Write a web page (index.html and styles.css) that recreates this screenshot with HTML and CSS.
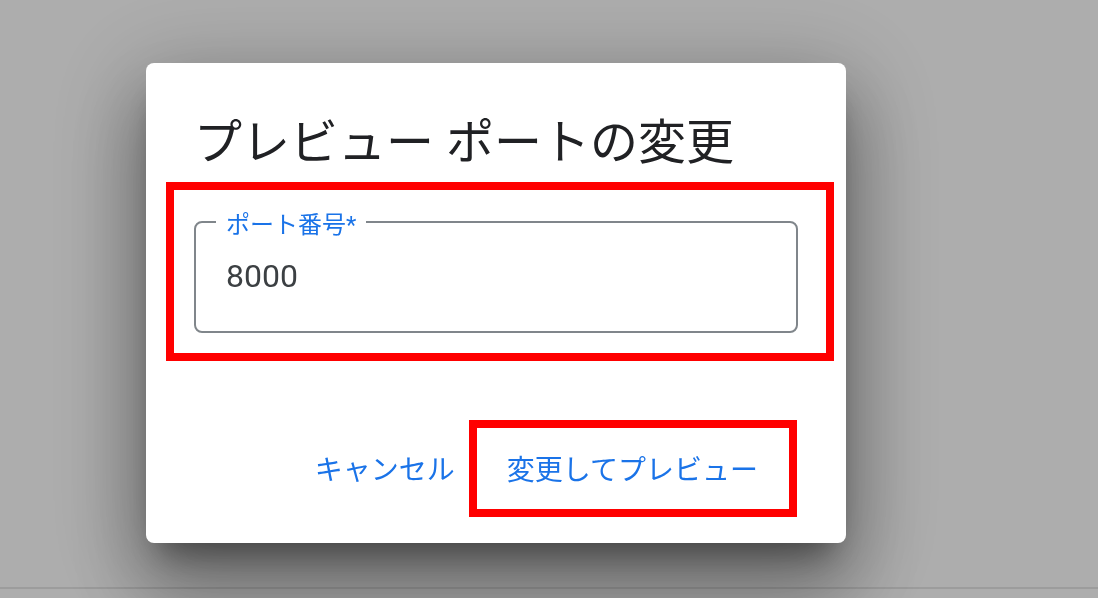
FILE: index.html
```html
<!DOCTYPE html>
<html lang="ja">
<head>
<meta charset="utf-8">
<title>プレビュー ポートの変更</title>
<link rel="stylesheet" href="styles.css">
</head>
<body>
<div class="page">
  <main class="main"></main>
  <footer class="footer"></footer>
</div>
<div class="backdrop"></div>
<div class="overlay">
  <div class="dialog" role="dialog" aria-labelledby="dlg-title">
    <h1 class="dialog-title" id="dlg-title">プレビュー ポートの変更</h1>
    <div class="dialog-content">
      <fieldset class="field">
        <legend class="field-label">ポート番号*</legend>
        <input class="field-input" type="text" value="8000" aria-label="ポート番号">
      </fieldset>
    </div>
    <div class="dialog-actions">
      <button class="btn" type="button">キャンセル</button>
      <button class="btn" type="button">変更してプレビュー</button>
    </div>
  </div>
</div>
<div class="mark mark-field"></div>
<div class="mark mark-button"></div>
</body>
</html>
```

FILE: styles.css
```css
* { box-sizing: border-box; }

html, body {
  margin: 0;
  height: 100%;
  overflow: hidden;
  font-family: Roboto, "Noto Sans CJK JP", sans-serif;
}

body { background: #ffffff; }

.page {
  height: 598px;
  display: flex;
  flex-direction: column;
}

.main { flex: 1; }

.footer {
  height: 11px;
  border-top: 2px solid #e6e6e6;
}

.backdrop {
  position: fixed;
  inset: 0;
  background: rgba(0, 0, 0, 0.32);
}

.overlay {
  position: fixed;
  inset: 0;
  padding: 63px 0 0 146px;
}

.dialog {
  width: 700px;
  height: 480px;
  background: #ffffff;
  border-radius: 8px;
  box-shadow:
    0 22px 30px -14px rgba(0, 0, 0, 0.4),
    0 48px 76px 6px rgba(0, 0, 0, 0.28),
    0 18px 92px 16px rgba(0, 0, 0, 0.2);
  padding: 48px 48px 0 48px;
  display: flex;
  flex-direction: column;
}

.dialog-title {
  margin: 0;
  font-size: 48px;
  line-height: 64px;
  font-weight: 400;
  color: #202124;
}

.dialog-content {
  padding-top: 32px;
}

.field {
  margin: 0;
  height: 126px;
  border: 2px solid #80868b;
  border-radius: 8px;
  padding: 0 30px;
  min-width: 0;
}

.field-label {
  margin-left: -10px;
  padding: 6px 10px 0;
  font-size: 24px;
  line-height: 24px;
  color: #1a73e8;
}

.field-input {
  display: block;
  width: 100%;
  margin-top: 19px;
  padding: 0;
  border: 0;
  outline: none;
  background: transparent;
  font-family: Roboto, "Noto Sans CJK JP", sans-serif;
  font-size: 32px;
  line-height: 40px;
  height: 40px;
  color: #3c4043;
}

.dialog-actions {
  margin-top: auto;
  display: flex;
  justify-content: flex-end;
  gap: 20px;
  padding: 0 24px 39px 0;
}

.btn {
  height: 72px;
  padding: 0 16px;
  border: 0;
  background: transparent;
  font-family: Roboto, "Noto Sans CJK JP", sans-serif;
  font-size: 28px;
  color: #1a73e8;
  cursor: pointer;
}

.mark {
  position: absolute;
  border: 8px solid #ff0000;
}

.mark-field {
  left: 166px;
  top: 182px;
  width: 668px;
  height: 179px;
}

.mark-button {
  left: 469px;
  top: 420px;
  width: 328px;
  height: 97px;
}
```
